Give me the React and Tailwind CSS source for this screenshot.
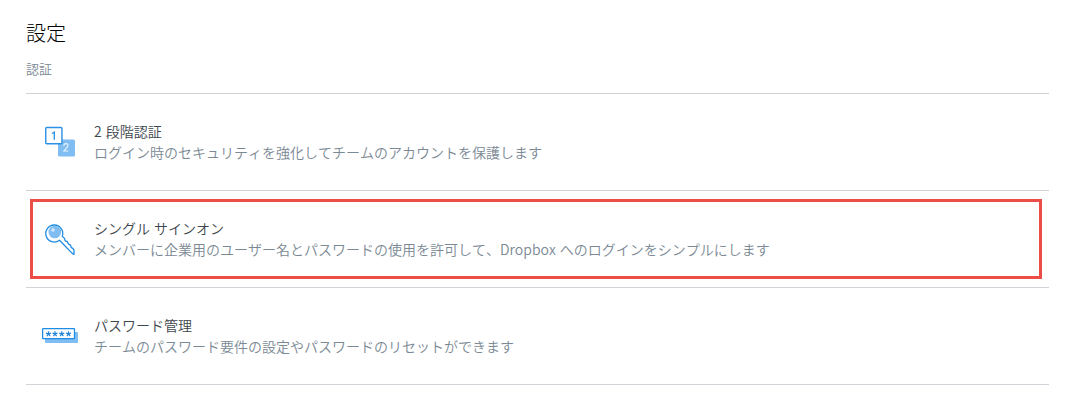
function StepsIcon() {
  return (
    <svg width="50" height="50" viewBox="36 117 50 50" fill="none" aria-hidden="true">
      <rect x="58" y="139.500" width="17" height="17" rx="1.5" fill="#80bdf3" />
      <rect x="45.750" y="127.500" width="16.200" height="16.200" rx="1" fill="#fff" stroke="#2a91e6" strokeWidth="1.4" />
      <path d="M52 133.500l2.300-1.400v7.600" stroke="#2a8fe2" strokeWidth="1.3" />
      <path d="M63.700 145.900c.2-3 4.300-3 4.300-.4 0 1.600-2.800 3.800-4.200 5.500h4.600" stroke="#e8f4fd" strokeWidth="1.1" />
    </svg>
  );
}

function KeyIcon() {
  return (
    <svg width="50" height="50" viewBox="36 214 50 50" fill="none" aria-hidden="true">
      <path
        d="M59.500 240.200L72.200 253.400L74 254.300V250.200L73 248.600L71.200 247.400L70.500 245.200L68.600 244.200L67.300 241.600L65.200 240.800L64.500 238.400L62.300 236.300A8.500 8.500 0 1 0 59.500 240.200Z"
        fill="#fff"
        stroke="#1f8ce6"
        strokeWidth="1.3"
        strokeLinejoin="round"
      />
      <circle cx="54.800" cy="232" r="6.300" fill="#80bdf3" />
      <circle cx="53" cy="230" r="1.700" fill="#d5eafb" />
    </svg>
  );
}

function PasswordIcon() {
  const stars = [48.5, 55, 61.800, 68.500];
  return (
    <svg width="50" height="50" viewBox="36 311 50 50" fill="none" aria-hidden="true">
      <rect x="45" y="332" width="33" height="11" rx="1" fill="#80bdf3" />
      <rect x="42.600" y="328.600" width="31.900" height="10" rx=".6" fill="#fff" stroke="#1f8ce6" strokeWidth="1.3" />
      {stars.map((x) => (
        <path
          key={x}
          d={`M${x} 333.900v-2.600M${x} 333.900l2.500-.8M${x} 333.900l1.600 2.200M${x} 333.900l-1.600 2.200M${x} 333.900l-2.500-.8`}
          stroke="#2385d8"
          strokeWidth="1.2"
        />
      ))}
    </svg>
  );
}

const settings = [
  {
    title: "2 段階認証",
    description: "ログイン時のセキュリティを強化してチームのアカウントを保護します",
    Icon: StepsIcon,
  },
  {
    title: "シングル サインオン",
    description: "メンバーに企業用のユーザー名とパスワードの使用を許可して、Dropbox へのログインをシンプルにします",
    Icon: KeyIcon,
    highlighted: true,
  },
  {
    title: "パスワード管理",
    description: "チームのパスワード要件の設定やパスワードのリセットができます",
    Icon: PasswordIcon,
  },
];

export default function App() {
  return (
    <main
      lang="ja"
      className="h-[407px] bg-white pt-[18px] pr-[17px] pl-[26px] font-['Noto_Sans_CJK_JP',sans-serif] font-[350] [font-kerning:none]"
    >
      <h1 className="text-[20px] leading-[30px] font-light text-black">設定</h1>
      <h2 className="mt-[11px] text-[13px] leading-[20px] text-[#7b8994]">認証</h2>
      <ul className="mt-[14px] border-t border-[#d0d4d9]">
        {settings.map(({ title, description, Icon, highlighted }) => (
          <li key={title} className="relative flex h-[97px] items-center gap-2 border-b border-[#d0d4d9] pl-[10px]">
            <Icon />
            <div className="text-[14px] leading-[21px] whitespace-nowrap [word-spacing:1px]">
              <h3 className="text-[#3d464d]">{title}</h3>
              <p className="text-[#7b8994]">{description}</p>
            </div>
            {highlighted && (
              <div className="pointer-events-none absolute top-[8px] right-[7px] bottom-[8px] left-[4px] border-3 border-[#ec4d47]" />
            )}
          </li>
        ))}
      </ul>
    </main>
  );
}
